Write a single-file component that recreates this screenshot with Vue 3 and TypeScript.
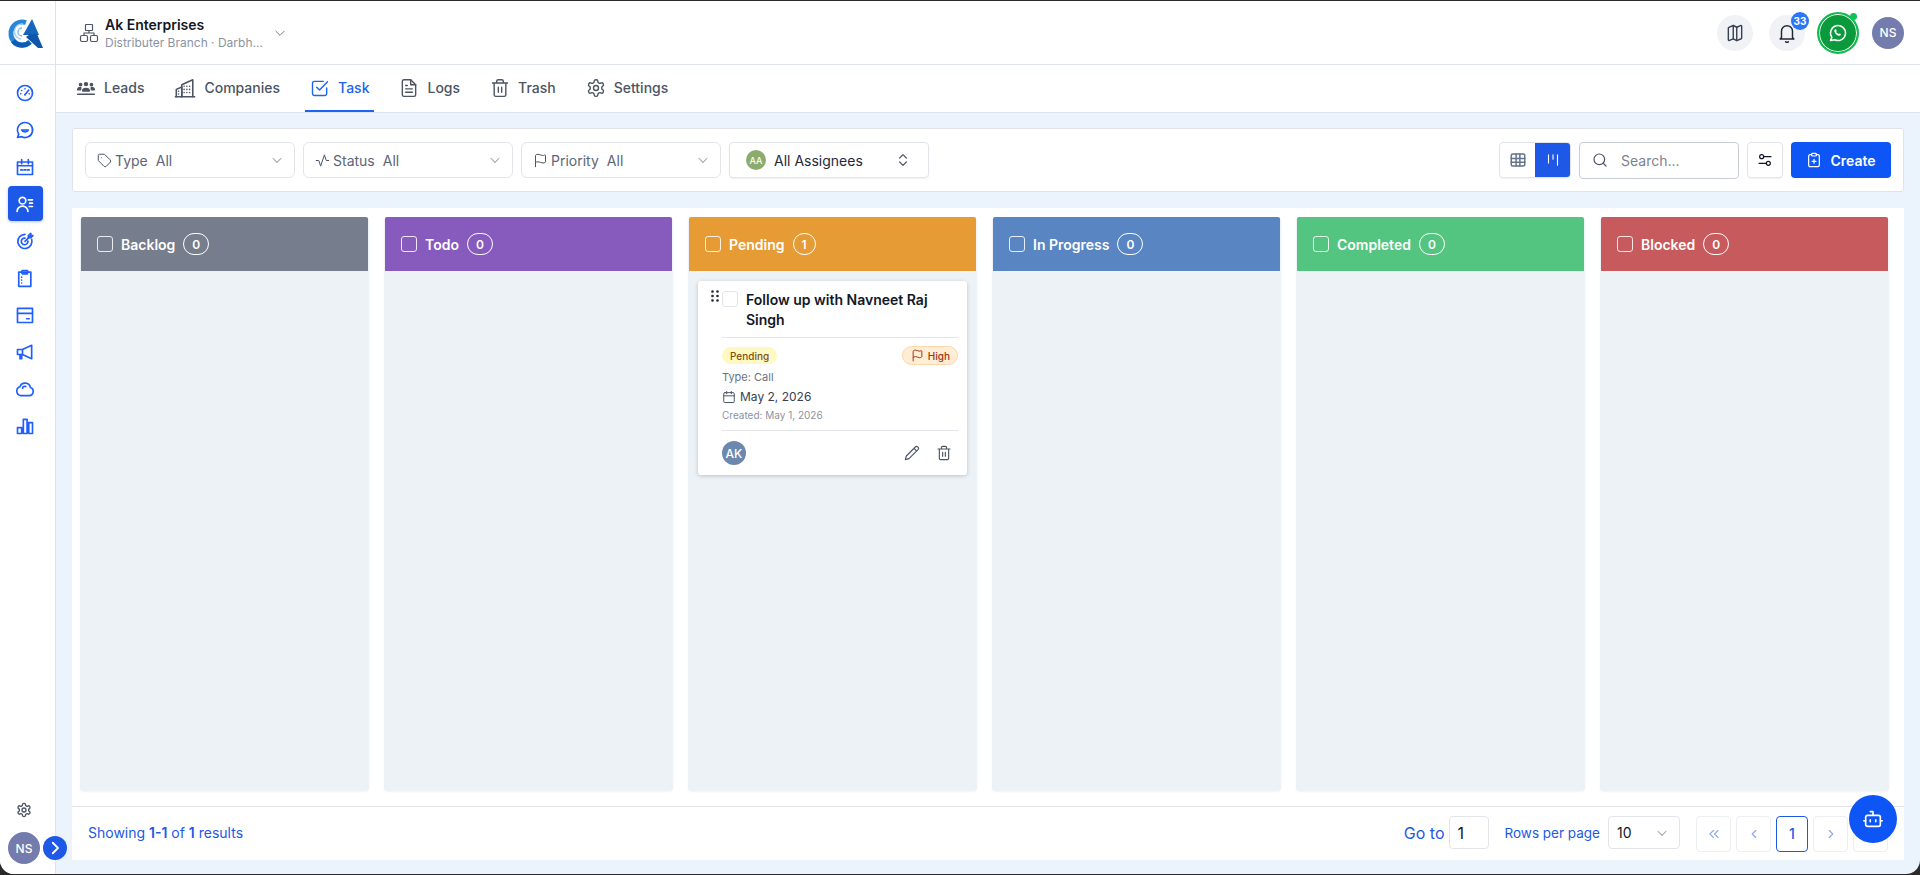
<template>
  <div class="window">
    <div class="shell">
      <aside class="sidebar">
        <div class="logo">
          <svg viewBox="0 0 36 34" width="36" height="34">
            <path d="M19 6.500A11.500 11.500 0 1 0 23 26" fill="none" stroke="#2a86d8" stroke-width="5" />
            <path d="M6 25a11.500 11.500 0 0 0 17 1" fill="none" stroke="#0f5cb5" stroke-width="5" />
            <path d="M16 8a7.500 7.500 0 0 0-2 15" fill="none" stroke="#a5d3f0" stroke-width="1.500" />
            <path d="M15 12a4 4 0 0 0 0 8" fill="none" stroke="#7fbce8" stroke-width="1.500" />
            <path d="M25 3 16 19h16z" fill="#1565bd" />
            <path d="M23 18h7l6 14h-5L19 21z" fill="#0f55ac" />
          </svg>
        </div>
        <nav class="side-nav">
          <a v-for="item in sideItems" :key="item.name" class="side-item" :class="{ active: item.name === 'leads' }">
            <svg viewBox="0 0 24 24" width="20" height="20" fill="none" stroke="currentColor" stroke-width="2"
              stroke-linecap="round" stroke-linejoin="round">
              <path v-for="d in item.paths" :key="d" :d="d" />
            </svg>
          </a>
        </nav>
        <div class="side-bottom">
          <svg class="side-gear" viewBox="0 0 24 24" width="16" height="16" fill="none" stroke="#4b5563"
            stroke-width="2" stroke-linecap="round" stroke-linejoin="round">
            <path :d="gearPath" />
            <circle cx="12" cy="12" r="3" />
          </svg>
          <div class="side-user">
            <span class="avatar avatar-ns">NS</span>
            <span class="expand">
              <svg viewBox="0 0 24 24" width="18" height="18" fill="none" stroke="#fff" stroke-width="2.4"
                stroke-linecap="round" stroke-linejoin="round">
                <path d="m9 5 7 7-7 7" />
              </svg>
            </span>
          </div>
        </div>
      </aside>

      <div class="main">
        <header class="topbar">
          <div class="branch">
            <svg viewBox="0 0 20 20" width="20" height="20" fill="none" stroke="#4b5563" stroke-width="1.2"
              stroke-linejoin="round">
              <rect x="6.500" y="1.500" width="7" height="6" rx="0.500" />
              <rect x="1.500" y="12.500" width="7" height="6" rx="1.500" />
              <rect x="11.500" y="12.500" width="7" height="6" rx="1.500" />
              <path d="M10 7.500V10M5 12.500V10h10v2.500" />
            </svg>
            <div class="branch-text">
              <strong>Ak Enterprises</strong>
              <span>Distributer Branch · Darbh...</span>
            </div>
            <svg class="branch-chevron" viewBox="0 0 24 24" width="14" height="14" fill="none" stroke="#6b7280"
              stroke-width="1.6" stroke-linecap="round" stroke-linejoin="round">
              <path d="m5 9 7 7 7-7" />
            </svg>
          </div>
          <div class="top-actions">
            <span class="round-btn">
              <svg viewBox="0 0 24 24" width="20" height="20" fill="none" stroke="#374151" stroke-width="1.7"
                stroke-linecap="round" stroke-linejoin="round">
                <path
                  d="M14.100 5.100 9.900 3 4.600 5.200c-.4.200-.6.500-.6.900V20a1 1 0 0 0 1.400.9L9.900 19l4.200 2.100 5.300-2.200c.4-.2.600-.5.600-.9V4a1 1 0 0 0-1.400-.9z" />
                <path d="M9.900 3v16M14.100 5.100v16" />
              </svg>
            </span>
            <span class="round-btn bell">
              <svg viewBox="0 0 24 24" width="22" height="22" fill="none" stroke="#1f2937" stroke-width="1.6"
                stroke-linecap="round" stroke-linejoin="round">
                <path d="M6 17V10a6 6 0 0 1 12 0v7l1.500 1.500h-15z" />
                <path d="M10.500 21.500a2 2 0 0 0 3 0" />
              </svg>
              <b class="bell-count">33</b>
            </span>
            <span class="whatsapp">
              <svg viewBox="0 0 24 24" width="20" height="20" fill="none" stroke="#fff" stroke-width="1.8"
                stroke-linecap="round" stroke-linejoin="round">
                <path d="M3 21l1.650-3.800a9 9 0 1 1 3.400 2.900z" />
                <path fill="#fff" stroke="none"
                  d="M8.600 7.800c.3-.3.900-.4 1.100 0l.7 1.500c.1.300 0 .6-.2.800l-.5.500c.5 1.100 1.500 2.100 2.700 2.700l.5-.5c.2-.2.500-.3.800-.2l1.500.7c.4.200.4.800.1 1.100-.7.900-1.700 1.200-2.800.8-2.300-.8-4.100-2.600-4.800-4.800-.3-1-.1-1.900.4-2.600z" />
              </svg>
              <i class="online" />
            </span>
            <span class="avatar avatar-ns">NS</span>
          </div>
        </header>

        <nav class="tabs">
          <a v-for="tab in tabs" :key="tab.label" class="tab" :class="{ current: tab.label === 'Task' }">
            <svg viewBox="0 0 24 24" :width="tab.size" :height="tab.size" :fill="tab.solid ? 'currentColor' : 'none'"
              stroke="currentColor" stroke-width="1.7" stroke-linecap="round" stroke-linejoin="round">
              <path v-for="d in tab.paths" :key="d" :d="d" />
            </svg>
            {{ tab.label }}
          </a>
        </nav>

        <main class="content">
          <section class="toolbar">
            <div v-for="f in filters" :key="f.label" class="filter" :class="f.cls">
              <svg viewBox="0 0 24 24" width="15" height="15" fill="none" stroke="#4b5563" stroke-width="1.6"
                stroke-linecap="round" stroke-linejoin="round">
                <path v-for="d in f.paths" :key="d" :d="d" />
              </svg>
              <span class="filter-label">{{ f.label }}</span>
              <span class="filter-value">All</span>
              <svg class="filter-chevron" viewBox="0 0 24 24" width="14" height="14" fill="none" stroke="#9ca3af"
                stroke-width="1.8" stroke-linecap="round" stroke-linejoin="round">
                <path d="m5 9 7 7 7-7" />
              </svg>
            </div>
            <div class="assignees">
              <span class="avatar avatar-aa">AA</span>
              <span>All Assignees</span>
              <svg viewBox="0 0 24 24" width="16" height="16" fill="none" stroke="#4b5563" stroke-width="1.8"
                stroke-linecap="round" stroke-linejoin="round">
                <path d="m7 15 5 5 5-5M7 9l5-5 5 5" />
              </svg>
            </div>

            <div class="view-toggle">
              <span class="view-btn">
                <svg viewBox="0 0 24 24" width="18" height="18" fill="none" stroke="#64748b" stroke-width="2"
                  stroke-linecap="round" stroke-linejoin="round">
                  <rect x="3" y="4" width="18" height="16" rx="2" />
                  <path d="M3 10h18M3 15h18M9.500 4v16M14.500 4v16" />
                </svg>
              </span>
              <span class="view-btn on">
                <svg viewBox="0 0 24 24" width="18" height="18" fill="none" stroke="#fff" stroke-width="1.5"
                  stroke-linecap="round">
                  <path d="M6 5v11M12 5v6M18 5v14" />
                </svg>
              </span>
            </div>
            <label class="search">
              <svg viewBox="0 0 24 24" width="16" height="16" fill="none" stroke="#4b5563" stroke-width="1.8"
                stroke-linecap="round">
                <circle cx="11" cy="11" r="8" />
                <path d="m21 21-4.300-4.300" />
              </svg>
              <input type="text" placeholder="Search..." />
            </label>
            <span class="tune-btn">
              <svg viewBox="0 0 24 24" width="16" height="16" fill="none" stroke="#111827" stroke-width="1.8"
                stroke-linecap="round">
                <circle cx="7" cy="7" r="3" />
                <circle cx="17" cy="17" r="3" />
                <path d="M10 7h11M3 17h11" />
              </svg>
            </span>
            <button type="button" class="create-btn">
              <svg viewBox="0 0 24 24" width="16" height="16" fill="none" stroke="#fff" stroke-width="1.8"
                stroke-linecap="round" stroke-linejoin="round">
                <rect x="8.500" y="2" width="7" height="4" rx="1" />
                <path d="M15.500 4H18a2 2 0 0 1 2 2v14a2 2 0 0 1-2 2H6a2 2 0 0 1-2-2V6a2 2 0 0 1 2-2h2.500" />
                <path d="M12 11v6M9 14h6" />
              </svg>
              Create
            </button>
          </section>

          <section class="board">
            <div class="columns">
              <div v-for="col in columns" :key="col.name" class="column">
                <div class="column-head" :style="{ background: col.color }">
                  <span class="head-check" />
                  <span class="head-name">{{ col.name }}</span>
                  <span class="head-count">{{ col.count }}</span>
                </div>
                <article v-if="col.count" class="task-card">
                  <svg class="drag" viewBox="0 0 8 12" width="8" height="12" fill="#1f2937">
                    <circle v-for="dot in dragDots" :key="dot[0] + '-' + dot[1]" :cx="dot[0]" :cy="dot[1]" r="1.3" />
                  </svg>
                  <div class="card-top">
                    <span class="card-check" />
                    <h4>Follow up with Navneet Raj Singh</h4>
                  </div>
                  <div class="card-body">
                    <div class="badges">
                      <span class="badge-status">Pending</span>
                      <span class="badge-priority">
                        <svg viewBox="0 0 24 24" width="13" height="13" fill="none" stroke="currentColor"
                          stroke-width="1.8" stroke-linecap="round" stroke-linejoin="round">
                          <path :d="flagPath" />
                        </svg>
                        High
                      </span>
                    </div>
                    <p class="card-type">Type: Call</p>
                    <p class="card-date">
                      <svg viewBox="0 0 24 24" width="14" height="14" fill="none" stroke="#4b5563" stroke-width="1.7"
                        stroke-linecap="round" stroke-linejoin="round">
                        <rect x="3" y="4.500" width="18" height="17" rx="2" />
                        <path d="M8 2.500v4M16 2.500v4M3 10h18" />
                      </svg>
                      May 2, 2026
                    </p>
                    <p class="card-created">Created: May 1, 2026</p>
                    <div class="card-foot">
                      <span class="avatar avatar-ak">AK</span>
                      <span class="card-actions">
                        <svg viewBox="0 0 24 24" width="16" height="16" fill="none" stroke="#4b5563" stroke-width="1.7"
                          stroke-linecap="round" stroke-linejoin="round">
                          <path d="M17 3a2.830 2.830 0 0 1 4 4L7.500 20.500 2 22l1.500-5.500zM15 5l4 4" />
                        </svg>
                        <svg viewBox="0 0 24 24" width="16" height="16" fill="none" stroke="#4b5563" stroke-width="1.7"
                          stroke-linecap="round" stroke-linejoin="round">
                          <path :d="trashPath" />
                          <path d="M10 11v6M14 11v6" />
                        </svg>
                      </span>
                    </div>
                  </div>
                </article>
              </div>
            </div>

            <footer class="pager-bar">
              <p class="showing">Showing <b>1-1</b> of <b>1</b> results</p>
              <div class="pager-right">
                <span class="goto">Go to</span>
                <span class="goto-box">1</span>
                <span class="rows-label">Rows per page</span>
                <span class="rows-select">
                  10
                  <svg viewBox="0 0 24 24" width="14" height="14" fill="none" stroke="#9ca3af" stroke-width="1.8"
                    stroke-linecap="round" stroke-linejoin="round">
                    <path d="m5 9 7 7 7-7" />
                  </svg>
                </span>
                <div class="pager">
                  <span class="page-btn">
                    <svg viewBox="0 0 24 24" width="14" height="14" fill="none" stroke="#8fa9ef" stroke-width="2"
                      stroke-linecap="round" stroke-linejoin="round">
                      <path d="m11 6-6 6 6 6M19 6l-6 6 6 6" />
                    </svg>
                  </span>
                  <span class="page-btn">
                    <svg viewBox="0 0 24 24" width="14" height="14" fill="none" stroke="#8fa9ef" stroke-width="2"
                      stroke-linecap="round" stroke-linejoin="round">
                      <path d="m15 6-6 6 6 6" />
                    </svg>
                  </span>
                  <span class="page-btn page-on">1</span>
                  <span class="page-btn">
                    <svg viewBox="0 0 24 24" width="14" height="14" fill="none" stroke="#8fa9ef" stroke-width="2"
                      stroke-linecap="round" stroke-linejoin="round">
                      <path d="m9 6 6 6-6 6" />
                    </svg>
                  </span>
                  <span class="page-btn" />
                </div>
              </div>
              <span class="bot">
                <svg viewBox="0 0 24 24" width="22" height="22" fill="none" stroke="#fff" stroke-width="1.8"
                  stroke-linecap="round" stroke-linejoin="round">
                  <path d="M12 8V4H9" />
                  <rect x="4" y="8" width="16" height="12" rx="2" />
                  <path d="M2 14h2M20 14h2M15 13v2M9 13v2" />
                </svg>
              </span>
            </footer>
          </section>
        </main>
      </div>
    </div>
  </div>
</template>

<script setup lang="ts">
interface SideItem {
  name: string
  paths: string[]
}

interface TabItem {
  label: string
  size: number
  solid?: boolean
  paths: string[]
}

const gearPath =
  'M12.220 2h-.44a2 2 0 0 0-2 2v.18a2 2 0 0 1-1 1.730l-.43.25a2 2 0 0 1-2 0l-.15-.08a2 2 0 0 0-2.730.73l-.22.38a2 2 0 0 0 .73 2.730l.15.1a2 2 0 0 1 1 1.720v.51a2 2 0 0 1-1 1.740l-.15.09a2 2 0 0 0-.73 2.730l.22.38a2 2 0 0 0 2.730.73l.15-.08a2 2 0 0 1 2 0l.43.25a2 2 0 0 1 1 1.730V20a2 2 0 0 0 2 2h.44a2 2 0 0 0 2-2v-.18a2 2 0 0 1 1-1.730l.43-.25a2 2 0 0 1 2 0l.15.08a2 2 0 0 0 2.730-.73l.22-.39a2 2 0 0 0-.73-2.730l-.15-.08a2 2 0 0 1-1-1.740v-.5a2 2 0 0 1 1-1.740l.15-.09a2 2 0 0 0 .73-2.730l-.22-.38a2 2 0 0 0-2.730-.73l-.15.08a2 2 0 0 1-2 0l-.43-.25a2 2 0 0 1-1-1.730V4a2 2 0 0 0-2-2z'
const flagPath =
  'M4 22V4a1 1 0 0 1 .4-.8A6 6 0 0 1 8 2c3 0 5 2 7.330 2q2 0 3.070-.8A1 1 0 0 1 20 4v10a1 1 0 0 1-.4.8A6 6 0 0 1 16 16c-3 0-5-2-8-2a6 6 0 0 0-4 1.530'
const trashPath = 'M3 6h18M19 6v14a2 2 0 0 1-2 2H7a2 2 0 0 1-2-2V6M8 6V4a2 2 0 0 1 2-2h4a2 2 0 0 1 2 2v2'

const dragDots = [
  [1.5, 1.5], [6.5, 1.5],
  [1.5, 6], [6.5, 6],
  [1.5, 10.5], [6.5, 10.5]
]

const sideItems: SideItem[] = [
  {
    name: 'dashboard',
    paths: [
      'M12 3a9 9 0 1 0 0 18 9 9 0 0 0 0-18z',
      'M12 14l4.500-5.500',
      'M12 7h.01M8 9h.01M7 13h.01M17 13h.01M12 14h.01'
    ]
  },
  { name: 'chat', paths: ['M12 3a9 9 0 1 1-4 17l-5 1 1.500-4A9 9 0 0 1 12 3z', 'M8 12h8c-1 3-7 3-8 0z'] },
  { name: 'calendar', paths: ['M3 6h18v15H3z', 'M3 10.500h18', 'M8 3v5M16 3v5', 'M7 15.500h2M11 15.500h2M15 15.500h2'] },
  { name: 'leads', paths: ['M9 4a4 4 0 1 0 0 8 4 4 0 0 0 0-8z', 'M2.500 21a6.500 6.500 0 0 1 13 0', 'M16 7h5M17.500 11h3.500M17 15h4'] },
  { name: 'target', paths: ['M12 4a8.500 8.500 0 1 0 8 6', 'M12 8.500a4 4 0 1 0 3.500 3.500', 'M12 12.500l7-7', 'M16 5.500l3-2.500v2.500h2.500L19 8h-3z'] },
  { name: 'clipboard', paths: ['M4.500 5H19v17H4.500z', 'M8.500 3h6.500v4H8.500z', 'M8 11h.01M8 14.500h.01M8 18h.01'] },
  { name: 'card', paths: ['M3 4h18v17H3z', 'M3 10h18', 'M14 16.500h3'] },
  { name: 'megaphone', paths: ['M3 9h6v6H3z', 'M9 9l11-5v16L9 15', 'M6 15v5h2v-5'] },
  { name: 'cloud', paths: ['M7 20h10a5 5 0 0 0 1.500-9.700 6.500 6.500 0 0 0-12.500-1A5.500 5.500 0 0 0 7 20z', 'M9 11a3 3 0 0 1 4-2'] },
  { name: 'chart', paths: ['M3 21h5v-7H3zM10 21h4.500V4H10zM16.500 21H21V8h-4.500z'] }
]

const tabs: TabItem[] = [
  {
    label: 'Leads',
    size: 20,
    solid: true,
    paths: [
      'M12 5.500a1.800 1.800 0 1 0 0 3.600 1.800 1.800 0 0 0 0-3.600z',
      'M5.500 6.500a1.400 1.400 0 1 0 0 2.800 1.400 1.400 0 0 0 0-2.800zM18.500 6.500a1.400 1.400 0 1 0 0 2.800 1.400 1.400 0 0 0 0-2.800z',
      'M8 15.500c0-4 8-4 8 0zM2 14c0-2.500 3-2.800 3.800-2.500l-.3 2.500zM22 14c0-2.500-3-2.800-3.800-2.500l.3 2.500z',
      'M2 19.500h20'
    ]
  },
  {
    label: 'Companies',
    size: 22,
    paths: [
      'M2.500 21.500v-8l6-2.500v10.500',
      'M8.500 21.500V8.500l12-5.500v18.500',
      'M1.500 21.500h21',
      'M11 10h.01M14 10h.01M17 10h.01M11 13.500h.01M14 13.500h.01M17 13.500h.01M11 17h.01M14 17h.01M17 17h.01M5 15.500h.01M5 18.500h.01'
    ]
  },
  {
    label: 'Task',
    size: 20,
    paths: [
      'M20 12v6.500a2.500 2.500 0 0 1-2.500 2.500h-12A2.500 2.500 0 0 1 3 18.500v-12A2.500 2.500 0 0 1 5.500 4H16',
      'm8 11 3.500 3.500L21 4.500'
    ]
  },
  {
    label: 'Logs',
    size: 20,
    paths: ['M6 2h8l6 6v12a2 2 0 0 1-2 2H6a2 2 0 0 1-2-2V4a2 2 0 0 1 2-2z', 'M14 2v6h6', 'M8 13h8M8 17h8M8 9h2']
  },
  {
    label: 'Trash',
    size: 20,
    paths: [trashPath, 'M10 11v6M14 11v6']
  },
  {
    label: 'Settings',
    size: 20,
    paths: [gearPath, 'M12 9a3 3 0 1 0 0 6 3 3 0 0 0 0-6z']
  }
]

const filters = [
  {
    label: 'Type',
    cls: 'filter-type',
    paths: [
      'M12.600 2.600A2 2 0 0 0 11.200 2H4a2 2 0 0 0-2 2v7.200a2 2 0 0 0 .6 1.400l8.700 8.700a2.400 2.400 0 0 0 3.400 0l6.600-6.600a2.400 2.400 0 0 0 0-3.400z',
      'M7.500 7.500h.01'
    ]
  },
  { label: 'Status', cls: 'filter-status', paths: ['M2 12h4l3 9 6-18 3 9h4'] },
  { label: 'Priority', cls: 'filter-priority', paths: [flagPath] }
]

const columns = [
  { name: 'Backlog', count: 0, color: '#767d8c' },
  { name: 'Todo', count: 0, color: '#875abe' },
  { name: 'Pending', count: 1, color: '#e69b35' },
  { name: 'In Progress', count: 0, color: '#5985c3' },
  { name: 'Completed', count: 0, color: '#53c580' },
  { name: 'Blocked', count: 0, color: '#c75a5c' }
]
</script>

<style>
html,
body {
  margin: 0;
  background: #2b2b2b;
}
</style>

<style scoped>
* {
  box-sizing: border-box;
}

.window {
  height: 875px;
  padding: 1px 0 1px;
  background: #2b2b2b;
  font-family: Inter, "Liberation Sans", sans-serif;
  overflow: hidden;
}

.shell {
  display: flex;
  height: 873px;
  overflow: hidden;
  border-radius: 0 0 14px 14px;
  background: #ebf3fd;
}

.sidebar {
  display: flex;
  flex-direction: column;
  flex: 0 0 56px;
  background: #fff;
  border-right: 1px solid #dfe3ea;
}

.logo {
  display: flex;
  align-items: center;
  justify-content: center;
  height: 64px;
  padding-right: 5px;
  border-bottom: 1px solid #dfe3ea;
}

.side-nav {
  display: flex;
  flex-direction: column;
  align-items: center;
  gap: 2px;
  padding: 10px 5px 0 0;
}

.side-item {
  display: flex;
  align-items: center;
  justify-content: center;
  width: 35px;
  height: 35px;
  color: #1f5eff;
  border-radius: 4px;
}

.side-item.active {
  color: #fff;
  background: #1d58e6;
  box-shadow: 0 1px 3px rgba(29, 88, 230, 0.35);
}

.side-bottom {
  display: flex;
  flex-direction: column;
  align-items: center;
  gap: 14px;
  margin-top: auto;
  padding-bottom: 10px;
}

.side-gear {
  width: 16px;
  margin-right: 7px;
}

.side-user {
  position: relative;
  width: 32px;
  margin-right: 7px;
}

.avatar {
  display: inline-flex;
  align-items: center;
  justify-content: center;
  flex: none;
  border-radius: 50%;
  color: #fff;
  font-weight: 500;
}

.avatar-ns {
  width: 32px;
  height: 32px;
  font-size: 12px;
  background: #737cac;
}

.expand {
  position: absolute;
  top: 4px;
  left: 35px;
  display: flex;
  align-items: center;
  justify-content: center;
  width: 24px;
  height: 24px;
  border-radius: 50%;
  background: #1d58e6;
}

.main {
  display: flex;
  flex: 1;
  flex-direction: column;
  min-width: 0;
}

.topbar {
  display: flex;
  align-items: center;
  justify-content: space-between;
  flex: 0 0 64px;
  padding: 0 16px 0 23px;
  background: #fff;
  border-bottom: 1px solid #dfe3ea;
}

.branch {
  display: flex;
  align-items: center;
  gap: 5px;
}

.branch-text {
  display: flex;
  flex-direction: column;
  width: 163px;
  margin-left: 1px;
}

.branch-text strong {
  font-size: 14px;
  line-height: 20px;
  font-weight: 600;
  color: #111827;
}

.branch-text span {
  font-size: 12px;
  line-height: 16px;
  color: #8b93a1;
  white-space: nowrap;
}

.top-actions {
  display: flex;
  align-items: center;
}

.round-btn {
  position: relative;
  display: flex;
  align-items: center;
  justify-content: center;
  width: 36px;
  height: 36px;
  margin-right: 16px;
  border-radius: 50%;
  background: #f1f2f6;
}

.round-btn.bell {
  margin-right: 12px;
}

.bell-count {
  position: absolute;
  top: -3px;
  right: -4px;
  min-width: 18px;
  height: 18px;
  padding: 0 2px;
  border-radius: 9px;
  font-size: 10px;
  font-weight: 700;
  line-height: 18px;
  text-align: center;
  color: #fff;
  background: #2a76f6;
}

.whatsapp {
  position: relative;
  display: flex;
  align-items: center;
  justify-content: center;
  width: 42px;
  height: 42px;
  margin-right: 13px;
  border: 2px solid #0fbd4e;
  border-radius: 50%;
  background: #0a9a3b;
  box-shadow: inset 0 0 0 1px #fff;
}

.online {
  position: absolute;
  top: -1px;
  right: 0;
  width: 7px;
  height: 7px;
  border-radius: 50%;
  background: #12c257;
}

.tabs {
  display: flex;
  align-items: stretch;
  gap: 20px;
  flex: 0 0 48px;
  padding-left: 15px;
  background: #fff;
  border-bottom: 1px solid #dfe3ea;
}

.tab {
  display: flex;
  align-items: center;
  gap: 8px;
  padding: 0 5px 2px;
  font-size: 14px;
  font-weight: 500;
  color: #4b5563;
}

.tab.current {
  color: #1d64f2;
  box-shadow: inset 0 -2px 0 #1d64f2;
}

.content {
  display: flex;
  flex: 1;
  flex-direction: column;
  min-height: 0;
  padding: 15px 16px 14px;
}

.toolbar {
  display: flex;
  align-items: center;
  flex: 0 0 64px;
  padding: 0 12px 0 12px;
  margin-bottom: 16px;
  background: #fff;
  border: 1px solid #e0e4ea;
  border-radius: 3px;
}

.filter {
  display: flex;
  align-items: center;
  gap: 3px;
  height: 36px;
  margin-right: 8px;
  padding: 0 10px 0 11px;
  border: 1px solid #e2e4ea;
  border-radius: 6px;
  font-size: 14px;
  color: #5b6678;
}

.filter-type,
.filter-status {
  width: 210px;
}

.filter-priority {
  width: 200px;
}

.filter-value {
  margin-left: 5px;
}

.filter-chevron {
  margin-left: auto;
}

.assignees {
  display: flex;
  align-items: center;
  width: 200px;
  height: 36px;
  padding: 0 17px 0 16px;
  border: 1px solid #e2e4ea;
  border-radius: 4px;
  box-shadow: 0 1px 2px rgba(0, 0, 0, 0.06);
  font-size: 14px;
  color: #1f2937;
}

.assignees svg {
  margin-left: auto;
}

.avatar-aa {
  width: 20px;
  height: 20px;
  margin-right: 8px;
  font-size: 9px;
  background: #8cab6d;
}

.view-toggle {
  display: flex;
  height: 36px;
  margin-left: auto;
  margin-right: 8px;
  border: 1px solid #e2e4ea;
  border-radius: 4px;
  overflow: hidden;
  box-shadow: 0 1px 2px rgba(0, 0, 0, 0.06);
}

.view-btn {
  display: flex;
  align-items: center;
  justify-content: center;
  width: 35px;
}

.view-btn.on {
  background: #1d58e6;
}

.search {
  display: flex;
  align-items: center;
  gap: 13px;
  width: 160px;
  height: 37px;
  margin-right: 8px;
  padding: 0 12px;
  border: 1px solid #c9ced6;
  border-radius: 4px;
}

.search svg {
  flex: none;
}

.search input {
  width: 100%;
  min-width: 0;
  border: 0;
  outline: 0;
  padding: 0;
  font: inherit;
  font-size: 14px;
  color: #111827;
  background: transparent;
}

.search input::placeholder {
  color: #7c8390;
  opacity: 1;
}

.tune-btn {
  display: flex;
  align-items: center;
  justify-content: center;
  width: 36px;
  height: 36px;
  margin-right: 8px;
  border: 1px solid #e2e4ea;
  border-radius: 4px;
  box-shadow: 0 1px 2px rgba(0, 0, 0, 0.06);
}

.create-btn {
  display: flex;
  align-items: center;
  justify-content: center;
  gap: 8px;
  width: 100px;
  height: 36px;
  border: 0;
  border-radius: 4px;
  font: inherit;
  font-size: 14px;
  font-weight: 600;
  color: #fff;
  background: #0d55f5;
}

.board {
  display: flex;
  flex: 1;
  flex-direction: column;
  min-height: 0;
  background: #fff;
}

.columns {
  display: grid;
  grid-template-columns: repeat(6, 289px);
  gap: 15px;
  flex: 1;
  padding: 9px 8px 15px;
  min-height: 0;
}

.column {
  padding: 0 1px;
  border-radius: 4px;
  background: #edf2f7;
  box-shadow: 0 1px 2px rgba(0, 0, 0, 0.05);
}

.column-head {
  display: flex;
  align-items: center;
  height: 54px;
  padding-left: 16px;
  border-radius: 2px 2px 0 0;
}

.head-check {
  width: 16px;
  height: 16px;
  margin-right: 8px;
  border: 1px solid rgba(255, 255, 255, 0.85);
  border-radius: 3px;
}

.head-name {
  font-size: 14px;
  font-weight: 600;
  color: #fff;
}

.head-count {
  display: flex;
  align-items: center;
  justify-content: center;
  height: 22px;
  margin-left: 8px;
  padding: 0 8px;
  border: 1px solid #fff;
  border-radius: 11px;
  font-size: 12px;
  font-weight: 600;
  color: #fff;
}

.task-card {
  position: relative;
  margin: 10px 9px 0;
  padding: 9px 9px 10px 24px;
  border-radius: 3px;
  background: #fff;
  box-shadow: 0 1px 4px rgba(0, 0, 0, 0.2);
}

.drag {
  position: absolute;
  top: 9px;
  left: 13px;
}

.card-top {
  display: flex;
  gap: 8px;
  padding-bottom: 7px;
  border-bottom: 1px solid #e2e4ea;
}

.card-check {
  flex: none;
  width: 16px;
  height: 16px;
  margin-top: 1px;
  border: 1px solid #e2e4ea;
  border-radius: 3px;
}

.card-top h4 {
  margin: 0;
  font-size: 14px;
  line-height: 20px;
  font-weight: 600;
  color: #111827;
}

.card-body p {
  margin: 0;
}

.badges {
  display: flex;
  align-items: center;
  justify-content: space-between;
  margin-top: 8px;
}

.badge-status {
  display: inline-flex;
  align-items: center;
  height: 17px;
  padding: 0 8px;
  border-radius: 9px;
  font-size: 10px;
  font-weight: 500;
  color: #854d0e;
  background: #fef9c3;
}

.badge-priority {
  display: inline-flex;
  align-items: center;
  gap: 4px;
  height: 19px;
  padding: 0 7px 0 8px;
  border: 1px solid #fed7aa;
  border-radius: 10px;
  font-size: 10px;
  font-weight: 500;
  color: #9a3412;
  background: #ffedd5;
}

.card-type {
  margin-top: 4px !important;
  font-size: 11px;
  line-height: 16px;
  color: #6b7280;
}

.card-date {
  display: flex;
  align-items: center;
  gap: 4px;
  margin-top: 2px !important;
  font-size: 12px;
  line-height: 20px;
  color: #374151;
}

.card-created {
  font-size: 10px;
  line-height: 16px;
  color: #8b93a1;
}

.card-foot {
  display: flex;
  align-items: center;
  justify-content: space-between;
  margin-top: 7px;
  padding-top: 10px;
  border-top: 1px solid #e2e4ea;
}

.avatar-ak {
  width: 24px;
  height: 24px;
  font-size: 12px;
  background: #6d88ae;
}

.card-actions {
  display: flex;
  gap: 16px;
  padding-right: 6px;
}

.pager-bar {
  position: relative;
  display: flex;
  align-items: center;
  justify-content: space-between;
  flex: 0 0 54px;
  padding: 0 16px 2px;
  border-top: 1px solid #e2e4ea;
  font-size: 14px;
  color: #1d58e6;
}

.showing {
  margin: 0;
}

.showing b {
  font-weight: 600;
}

.pager-right {
  display: flex;
  align-items: center;
}

.goto {
  margin-right: 4px;
  font-size: 16px;
}

.goto-box {
  display: flex;
  align-items: center;
  width: 40px;
  height: 33px;
  padding-left: 8px;
  margin-right: 16px;
  border: 1px solid #e2e4ea;
  border-radius: 4px;
  font-size: 16px;
  color: #111827;
}

.rows-label {
  margin-right: 8px;
  font-size: 13.5px;
}

.rows-select {
  display: flex;
  align-items: center;
  justify-content: space-between;
  width: 72px;
  height: 33px;
  padding: 0 10px 0 8px;
  margin-right: 16px;
  border: 1px solid #e2e4ea;
  border-radius: 4px;
  color: #111827;
}

.pager {
  display: flex;
  gap: 5px;
  margin-top: 2px;
}

.page-btn {
  display: flex;
  align-items: center;
  justify-content: center;
  width: 35px;
  height: 36px;
  border: 1px solid #eceef2;
  border-radius: 4px;
}

.page-on {
  width: 32px;
  border-color: #1d58e6;
  font-weight: 500;
}

.bot {
  position: absolute;
  top: -12px;
  right: 7px;
  display: flex;
  align-items: center;
  justify-content: center;
  width: 48px;
  height: 48px;
  border-radius: 50%;
  background: #0d55f5;
}
</style>
